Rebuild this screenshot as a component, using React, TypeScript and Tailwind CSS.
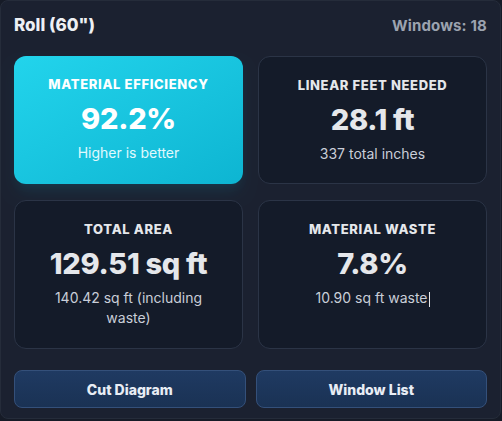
import React from 'react';

type Stat = {
    label: string;
    value: string;
    sub: string;
    highlight?: boolean;
    caret?: boolean;
};

const stats: Stat[] = [
    { label: 'Material Efficiency', value: '92.2%', sub: 'Higher is better', highlight: true },
    { label: 'Linear Feet Needed', value: '28.1 ft', sub: '337 total inches' },
    { label: 'Total Area', value: '129.51 sq ft', sub: '140.42 sq ft (including waste)' },
    { label: 'Material Waste', value: '7.8%', sub: '10.90 sq ft waste', caret: true },
];

function StatCard({ stat, tall }: { stat: Stat; tall: boolean }) {
    const base = stat.highlight
        ? 'bg-linear-to-br from-[#22d4ec] to-[#0db5d2] text-white shadow-lg shadow-cyan-500/10'
        : 'bg-[#141b29] border border-[#2b3446] text-[#e5e7eb]';
    return (
        <div className={`${base} ${tall ? 'h-[149px]' : 'h-[128px]'} rounded-xl flex flex-col items-center text-center px-4 pt-[18px]`}>
            <div className="text-[13px] leading-[20px] font-extrabold uppercase tracking-[0.05em]">{stat.label}</div>
            <div className="text-[29px] leading-[34px] font-extrabold mt-[8px] tracking-[-0.01em]">{stat.value}</div>
            <div className={`text-[14px] leading-[20px] mt-[7px] px-2 ${stat.highlight ? 'text-[#e0f9fd]' : 'text-[#c9ced8]'}`}>
                {stat.sub}
                {stat.caret && <span className="inline-block w-px h-[15px] bg-[#e5e7eb] align-middle ml-px"></span>}
            </div>
        </div>
    );
}

export default function App() {
    return (
        <div className="w-[502px] h-[421px] bg-[#161b27]" style={{ fontFamily: 'Inter, "Noto Sans", sans-serif' }}>
            <div className="w-[501px] h-[419px] rounded-lg border border-[#252c3a] bg-[#1b2130] px-[13px] pt-3">
                {/* Header */}
                <div className="flex items-center justify-between h-[26px]">
                    <h2 className="text-[17px] font-extrabold text-[#eef0f4]">Roll (60")</h2>
                    <span className="text-[15px] font-bold text-[#9ca3af] tracking-[0.01em]">Windows: 18</span>
                </div>

                {/* Stats */}
                <div className="grid grid-cols-2 gap-x-[15px] gap-y-[16px] mt-[17px]">
                    {stats.map((s, i) => (
                        <StatCard key={s.label} stat={s} tall={i > 1} />
                    ))}
                </div>

                {/* Actions */}
                <div className="grid grid-cols-2 gap-[10px] mt-[21px]">
                    <button className="h-[38px] rounded-lg bg-linear-to-b from-[#1f3a62] to-[#1a3254] border border-[#34507a] text-[14px] font-extrabold text-[#e8edf5]">
                        Cut Diagram
                    </button>
                    <button className="h-[38px] rounded-lg bg-linear-to-b from-[#1f3a62] to-[#1a3254] border border-[#34507a] text-[14px] font-extrabold text-[#e8edf5]">
                        Window List
                    </button>
                </div>
            </div>
        </div>
    );
}
